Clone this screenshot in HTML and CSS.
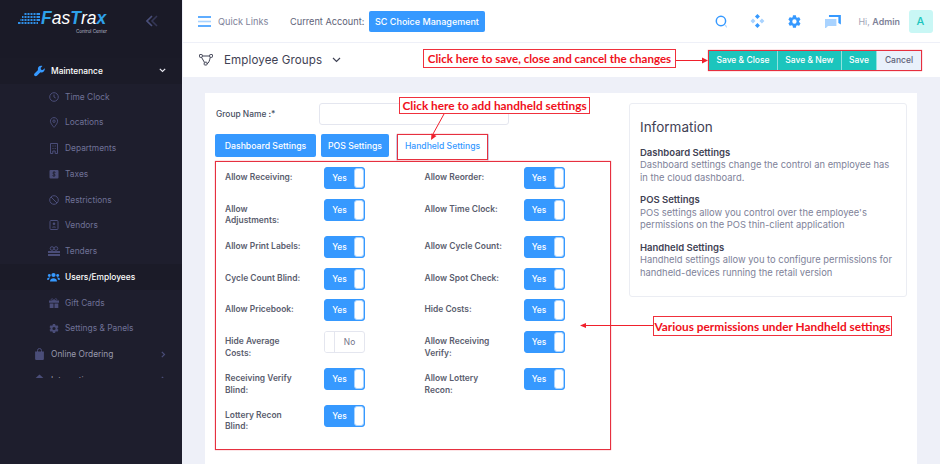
FILE: index.html
```html
<!DOCTYPE html>
<html lang="en">
<head>
<meta charset="utf-8">
<title>Employee Groups</title>
<link rel="stylesheet" href="styles.css">
</head>
<body>
<aside class="sidebar">
  <div class="brand">
    <svg class="brand-dots" width="22" height="12" viewBox="0 0 22 12"><g fill="#2f8fe8"><rect x="6" y="0" width="16" height="2"/><rect x="4" y="3" width="18" height="2"/><rect x="2" y="6" width="20" height="2"/><rect x="0" y="9" width="20" height="2"/></g><g stroke="#1a1a27" stroke-width="1"><path d="M9 0v12M12 0v12M15 0v12M18 0v12M6 0v12M3 0v12"/></g></svg>
    <div class="brand-text">
      <div class="brand-name"><span class="b">F</span>as<span class="b">T</span>ra<span class="b">x</span></div>
      <div class="brand-sub">Control Center</div>
    </div>
    <svg class="collapse" width="12" height="12" viewBox="0 0 12 12"><path d="M6 1 1 6l5 5" fill="none" stroke="#4a4f7a" stroke-width="1.6"/><path d="M11 1 6 6l5 5" fill="none" stroke="#343655" stroke-width="1.6"/></svg>
  </div>
  <div class="side-gap"></div>
  <nav class="menu">
    <div class="item top active">
      <svg class="ic" width="12" height="12" viewBox="0 0 12 12"><path d="M11.7 3 9.6 5 7.7 4.6 7.2 2.7 9.2.6C7.7-.1 6 .3 5.1 1.4 4.2 2.4 4 3.7 4.4 4.8L.6 8.6c-.7.7-.7 1.9 0 2.6.7.7 1.9.7 2.6 0L7 7.4c1.2.4 2.6.2 3.6-.8 1-1 1.4-2.3 1.1-3.6z" fill="#3699ff"/></svg>
      <span>Maintenance</span>
      <svg class="arr" width="7" height="5" viewBox="0 0 7 5"><path d="M.8.8 3.5 3.5 6.2.8" fill="none" stroke="#e8e8f0" stroke-width="1.2"/></svg>
    </div>
    <div class="item sub">
      <svg class="ic" width="10" height="10" viewBox="0 0 10 10"><circle cx="5" cy="5" r="4.3" fill="none" stroke="#4a4d78" stroke-width="1"/><path d="M5 2.5V5l1.7 1" fill="none" stroke="#4a4d78"/></svg><span>Time Clock</span>
    </div>
    <div class="item sub">
      <svg class="ic" width="10" height="11" viewBox="0 0 10 11"><path d="M5 .6C2.9.6 1.4 2.2 1.4 4.2 1.4 6.5 5 10.4 5 10.4S8.6 6.5 8.6 4.2C8.6 2.2 7.1.6 5 .6z" fill="none" stroke="#4a4d78"/><circle cx="5" cy="4.2" r="1.2" fill="none" stroke="#4a4d78"/></svg><span>Locations</span>
    </div>
    <div class="item sub">
      <svg class="ic" width="10" height="11" viewBox="0 0 10 11"><path d="M1.5.5h7v10H6.2V8H3.8v2.5H1.5z" fill="none" stroke="#4a4d78"/><path d="M3.5 2.5h1v1h-1zM5.7 2.5h1v1h-1zM3.5 5h1v1h-1zM5.7 5h1v1h-1z" fill="#4a4d78"/></svg><span>Departments</span>
    </div>
    <div class="item sub">
      <svg class="ic" width="10" height="10" viewBox="0 0 10 10"><rect x=".5" y="1" width="9" height="8.5" rx="1" fill="#4a4d78"/><path d="M6.5 3.5C6 3 4 2.8 3.8 4c-.2 1.3 2.6.9 2.4 2.2C6 7.3 4 7.1 3.4 6.5M5 2.3v5.500" fill="none" stroke="#1e1e2d" stroke-width=".8"/></svg><span>Taxes</span>
    </div>
    <div class="item sub">
      <svg class="ic" width="10" height="10" viewBox="0 0 10 10"><circle cx="5" cy="5" r="4.3" fill="none" stroke="#4a4d78"/><path d="M2 2l6 6" stroke="#4a4d78"/></svg><span>Restrictions</span>
    </div>
    <div class="item sub">
      <svg class="ic" width="10" height="10" viewBox="0 0 10 10"><rect x="1" y=".5" width="8" height="9" rx="1" fill="none" stroke="#4a4d78"/><circle cx="5" cy="3.8" r="1.3" fill="#4a4d78"/><path d="M2.8 7.5c.3-1.5 4.1-1.5 4.4 0z" fill="#4a4d78"/></svg><span>Vendors</span>
    </div>
    <div class="item sub">
      <svg class="ic" width="12" height="10" viewBox="0 0 12 10"><rect x="0" y="5" width="12" height="2" fill="#4a4d78"/><rect x="0" y="8" width="12" height="2" fill="#4a4d78"/><circle cx="4" cy="2.5" r="1.8" fill="none" stroke="#4a4d78"/><circle cx="8" cy="2.5" r="1.8" fill="none" stroke="#4a4d78"/></svg><span>Tenders</span>
    </div>
    <div class="item sub active">
      <svg class="ic" width="13" height="10" viewBox="0 0 13 10"><circle cx="6.5" cy="3" r="2.1" fill="#3699ff"/><path d="M3 9.5c0-4.4 7-4.4 7 0z" fill="#3699ff"/><circle cx="2.3" cy="3.5" r="1.4" fill="#3699ff"/><circle cx="10.7" cy="3.5" r="1.4" fill="#3699ff"/><path d="M0 7.8c0-2 1.5-2.7 3.1-2.3C2.4 6.2 2 7 2 7.8zM13 7.8c0-2-1.5-2.7-3.1-2.3.7.7 1.1 1.5 1.1 2.3z" fill="#3699ff"/></svg><span>Users/Employees</span>
    </div>
    <div class="item sub">
      <svg class="ic" width="10" height="10" viewBox="0 0 10 10"><path d="M0 2.5h10v2.3H0zM.7 5.500h3.8V10H.7zM5.500 5.500h3.8V10H5.500z" fill="#4a4d78"/><path d="M5 2.5C4 .2 1.8.4 2.3 1.8c.3.7 1.5.7 2.7.7zM5 2.5C6-.2 8.2.4 7.7 1.8 7.4 2.5 6.2 2.5 5 2.5z" fill="none" stroke="#4a4d78" stroke-width=".8"/></svg><span>Gift Cards</span>
    </div>
    <div class="item sub">
      <svg class="ic" width="11" height="11" viewBox="0 0 24 24"><path fill="#4a4d78" d="M12 15.5A3.5 3.5 0 0 1 8.5 12 3.5 3.5 0 0 1 12 8.5a3.5 3.5 0 0 1 3.5 3.5 3.5 3.5 0 0 1-3.5 3.5m7.43-2.53c.04-.32.07-.64.07-.97 0-.33-.03-.66-.07-1l2.11-1.63c.19-.15.24-.42.12-.64l-2-3.46c-.12-.22-.39-.31-.61-.22l-2.49 1c-.52-.39-1.06-.73-1.69-.98l-.37-2.65A.506.506 0 0 0 14 2h-4c-.25 0-.46.18-.5.42l-.37 2.65c-.63.25-1.17.59-1.69.98l-2.49-1c-.22-.09-.49 0-.61.22l-2 3.46c-.13.22-.07.49.12.64L4.57 11c-.04.34-.07.67-.07 1 0 .33.03.65.07.97l-2.11 1.66c-.19.15-.25.42-.12.64l2 3.46c.12.22.39.3.61.22l2.49-1.01c.52.4 1.06.74 1.69.99l.37 2.65c.04.24.25.42.5.42h4c.25 0 .46-.18.5-.42l.37-2.65c.63-.26 1.17-.59 1.69-.99l2.49 1.01c.22.08.49 0 .61-.22l2-3.46c.12-.22.07-.49-.12-.64l-2.11-1.66z"/></svg><span>Settings &amp; Panels</span>
    </div>
    <div class="item top">
      <svg class="ic" width="10" height="12" viewBox="0 0 10 12"><path d="M.6 3.5h8.8V11a1 1 0 0 1-1 1H1.6a1 1 0 0 1-1-1z" fill="#4a4d78"/><path d="M3 5V2.500a2 2 0 0 1 4 0V5" fill="none" stroke="#4a4d78"/></svg><span>Online Ordering</span>
      <svg class="arr" width="5" height="7" viewBox="0 0 5 7"><path d="M.8.8 3.5 3.5.8 6.2" fill="none" stroke="#4a4d78" stroke-width="1.2"/></svg>
    </div>
    <div class="item top">
      <svg class="ic" width="11" height="12" viewBox="0 0 11 12"><path d="M5.5.5 10.5 5v7H.5V5z" fill="#4a4d78"/></svg><span>Integrations</span>
      <svg class="arr" width="5" height="7" viewBox="0 0 5 7"><path d="M.8.8 3.5 3.5.8 6.2" fill="none" stroke="#4a4d78" stroke-width="1.2"/></svg>
    </div>
  </nav>
</aside>

<div class="main">
  <header class="topbar">
    <svg class="burger" width="13" height="11" viewBox="0 0 13 11"><path d="M0 1h13" stroke="#3699ff" stroke-width="1.6"/><path d="M0 5.5h13" stroke="#a9d3ff" stroke-width="1.6"/><path d="M0 10h13" stroke="#3699ff" stroke-width="1.6"/></svg>
    <span class="quick">Quick Links</span>
    <span class="account-label">Current Account:</span>
    <button class="account-btn">SC Choice Management</button>
    <div class="top-icons">
      <svg width="13" height="13" viewBox="0 0 13 13"><circle cx="6" cy="6" r="4.7" fill="none" stroke="#3699ff" stroke-width="1.5"/><path d="M10 10l2.5 2.5" stroke="#bcdcfd" stroke-width="1.3"/></svg>
      <svg width="15" height="14" viewBox="0 0 15 14"><path d="M7.5 0 10 2.5 7.5 5 5 2.5zM7.5 9 10 11.5 7.5 14 5 11.5z" fill="#3699ff"/><path d="M3 4.5 5.5 7 3 9.5.5 7zM12 4.5 14.5 7 12 9.5 9.5 7z" fill="#a9d3ff"/></svg>
      <svg width="15" height="15" viewBox="0 0 24 24"><path fill="#3699ff" d="M12 15.5A3.5 3.5 0 0 1 8.5 12 3.5 3.5 0 0 1 12 8.5a3.5 3.5 0 0 1 3.5 3.5 3.5 3.5 0 0 1-3.5 3.5m7.43-2.53c.04-.32.07-.64.07-.97 0-.33-.03-.66-.07-1l2.11-1.63c.19-.15.24-.42.12-.64l-2-3.46c-.12-.22-.39-.31-.61-.22l-2.49 1c-.52-.39-1.06-.73-1.69-.98l-.37-2.65A.506.506 0 0 0 14 2h-4c-.25 0-.46.18-.5.42l-.37 2.65c-.63.25-1.17.59-1.69.98l-2.49-1c-.22-.09-.49 0-.61.22l-2 3.46c-.13.22-.07.49.12.64L4.57 11c-.04.34-.07.67-.07 1 0 .33.03.65.07.97l-2.11 1.66c-.19.15-.25.42-.12.64l2 3.46c.12.22.39.3.61.22l2.49-1.01c.52.4 1.06.74 1.69.99l.37 2.65c.04.24.25.42.5.42h4c.25 0 .46-.18.5-.42l.37-2.65c.63-.26 1.17-.59 1.69-.99l2.49 1.01c.22.08.49 0 .61-.22l2-3.46c.12-.22.07-.49-.12-.64l-2.11-1.66z"/></svg>
      <svg width="16" height="13" viewBox="0 0 16 13"><path d="M4 0h12v9.5L13.5 8V2H4z" fill="#3699ff"/><path d="M0 4h11.5v7H3l-2 2H0z" fill="#a9d3ff"/></svg>
    </div>
    <span class="hi">Hi, <b>Admin</b></span>
    <div class="avatar">A</div>
  </header>

  <div class="subheader">
    <svg class="flow-ic" width="14" height="12" viewBox="0 0 14 12"><g fill="none" stroke="#3f4254" stroke-width="1"><rect x=".5" y=".5" width="2.8" height="2.8" rx=".6"/><rect x="10.7" y=".5" width="2.8" height="2.8" rx=".6"/><rect x="5.2" y="8.2" width="2.8" height="2.8" rx=".6"/><path d="M3.3 2h7.4M2.5 3.300 5.400 8.300M11.3 3.200C10.500 7 9.500 9.500 8 9.700"/></g></svg>
    <span class="page-title">Employee Groups</span>
    <svg class="title-arr" width="9" height="6" viewBox="0 0 9 6"><path d="M1 1l3.5 3.5L8 1" fill="none" stroke="#3f4254" stroke-width="1.2"/></svg>
    <div class="actions">
      <button class="act">Save &amp; Close</button>
      <button class="act">Save &amp; New</button>
      <button class="act">Save</button>
      <button class="act cancel">Cancel</button>
    </div>
  </div>

  <div class="content">
    <section class="card">
      <div class="form">
        <div class="group-row">
          <label class="group-label">Group Name :*</label>
          <div class="group-input"></div>
        </div>
        <div class="tabs">
          <button class="tab tab-d">Dashboard Settings</button>
          <button class="tab tab-p">POS Settings</button>
          <button class="tab tab-h">Handheld Settings</button>
        </div>
        <div class="perms">
          <div class="perm"><span class="perm-l">Allow Receiving:</span><div class="tog"><span class="tog-y">Yes</span><span class="tog-k"></span></div></div>
          <div class="perm"><span class="perm-l">Allow Reorder:</span><div class="tog"><span class="tog-y">Yes</span><span class="tog-k"></span></div></div>
          <div class="perm"><span class="perm-l">Allow<br>Adjustments:</span><div class="tog"><span class="tog-y">Yes</span><span class="tog-k"></span></div></div>
          <div class="perm"><span class="perm-l">Allow Time Clock:</span><div class="tog"><span class="tog-y">Yes</span><span class="tog-k"></span></div></div>
          <div class="perm"><span class="perm-l">Allow Print Labels:</span><div class="tog"><span class="tog-y">Yes</span><span class="tog-k"></span></div></div>
          <div class="perm"><span class="perm-l">Allow Cycle Count:</span><div class="tog"><span class="tog-y">Yes</span><span class="tog-k"></span></div></div>
          <div class="perm"><span class="perm-l">Cycle Count Blind:</span><div class="tog"><span class="tog-y">Yes</span><span class="tog-k"></span></div></div>
          <div class="perm"><span class="perm-l">Allow Spot Check:</span><div class="tog"><span class="tog-y">Yes</span><span class="tog-k"></span></div></div>
          <div class="perm"><span class="perm-l">Allow Pricebook:</span><div class="tog"><span class="tog-y">Yes</span><span class="tog-k"></span></div></div>
          <div class="perm"><span class="perm-l">Hide Costs:</span><div class="tog"><span class="tog-y">Yes</span><span class="tog-k"></span></div></div>
          <div class="perm"><span class="perm-l">Hide Average<br>Costs:</span><div class="tog off"><span class="tog-k"></span><span class="tog-n">No</span></div></div>
          <div class="perm"><span class="perm-l">Allow Receiving<br>Verify:</span><div class="tog"><span class="tog-y">Yes</span><span class="tog-k"></span></div></div>
          <div class="perm"><span class="perm-l">Receiving Verify<br>Blind:</span><div class="tog"><span class="tog-y">Yes</span><span class="tog-k"></span></div></div>
          <div class="perm"><span class="perm-l">Allow Lottery<br>Recon:</span><div class="tog"><span class="tog-y">Yes</span><span class="tog-k"></span></div></div>
          <div class="perm"><span class="perm-l">Lottery Recon<br>Blind:</span><div class="tog"><span class="tog-y">Yes</span><span class="tog-k"></span></div></div>
        </div>
      </div>
      <aside class="info">
        <h2 class="info-title">Information</h2>
        <h3 class="info-h">Dashboard Settings</h3>
        <p class="info-p">Dashboard settings change the control an employee has in the cloud dashboard.</p>
        <h3 class="info-h">POS Settings</h3>
        <p class="info-p">POS settings allow you control over the employee's permissions on the POS thin-client application</p>
        <h3 class="info-h">Handheld Settings</h3>
        <p class="info-p">Handheld settings allow you to configure permissions for handheld-devices running the retail version</p>
      </aside>
    </section>
  </div>
</div>

<div class="note note-save">Click here to save, close and cancel the changes</div>
<div class="note note-add">Click here to add handheld settings</div>
<div class="note note-perm">Various permissions under Handheld settings</div>
<div class="frame frame-actions"></div>
<div class="frame frame-tab"></div>
<div class="frame frame-perms"></div>
<svg class="arrows" width="940" height="464" viewBox="0 0 940 464">
  <g stroke="#f0202c" stroke-width="1" fill="#f0202c">
    <path d="M676 60.5H702" fill="none"/><path d="M708 60.5l-6-3v6z" stroke="none"/>
    <path d="M444 114 433 134" fill="none"/><path d="M431 140l.5-6.5 5 2.5z" stroke="none"/>
    <path d="M653 325.5H585" fill="none"/><path d="M580 325.5l6-2.5v5z" stroke="none"/>
  </g>
</svg>
</body>
</html>
```

FILE: styles.css
```css
* { box-sizing: border-box; }
html, body { margin: 0; padding: 0; }
body {
  position: relative;
  width: 940px;
  height: 464px;
  overflow: hidden;
  display: flex;
  font-family: Inter, "Noto Sans", sans-serif;
  background: #eef0f8;
  color: #3f4254;
}
button { font: inherit; border: 0; padding: 0; cursor: pointer; white-space: nowrap; }

/* sidebar */
.sidebar {
  width: 182px;
  flex: none;
  height: 464px;
  background: #1e1e2d;
  display: flex;
  flex-direction: column;
}
.brand {
  height: 42px;
  background: #1a1a27;
  display: flex;
  align-items: center;
  padding: 0 24px 0 18px;
}
.brand-dots { margin-top: -5px; margin-right: 1px; }
.brand-text { width: 66px; }
.brand-name {
  font-family: "Liberation Sans", sans-serif;
  font-style: italic;
  font-size: 17.500px;
  line-height: 21px;
  color: #fff;
  white-space: nowrap;
}
.brand-name .b { color: #2ea1ea; font-weight: 700; }
.brand-sub {
  font-size: 4.500px;
  line-height: 5px;
  text-align: right;
  color: #b9bccb;
  white-space: nowrap;
}
.collapse { margin-left: auto; }
.side-gap { height: 16px; background: #1a1a27; }
.menu { height: 320px; overflow: hidden; }
.item {
  height: 25.750px;
  display: flex;
  align-items: center;
  font-size: 8.400px;
  color: #8a8dab;
}
.item.top { padding-left: 34px; color: #9899ac; }
.item.sub { padding-left: 48px; color: #6f7196; }
.item.active { background: #1b1b28; color: #fff; font-weight: 500; }
.item.top .ic { width: 11px; margin-right: 6px; }
.item.sub .ic { width: 12px; margin-right: 5px; flex: none; }
.item.sub.active { padding-left: 47px; }
.item.sub.active .ic { width: 13px; margin-right: 5px; }
.arr { margin-left: auto; margin-right: 16px; }

/* top bar */
.main { flex: 1; min-width: 0; display: flex; flex-direction: column; margin-left: 1px; }
.topbar {
  height: 42px;
  background: #fff;
  display: flex;
  align-items: center;
  padding-left: 15px;
  flex: none;
  font-size: 9.200px;
  margin-bottom: 1px;
}
.burger { margin-right: 7px; }
.quick { color: #7e8299; width: 72px; }
.account-label { color: #5e6278; width: 79px; white-space: nowrap; }
.account-btn {
  width: 116px;
  height: 21px;
  background: #3699ff;
  color: #fff;
  border-radius: 2px;
  font-size: 9px;
  font-weight: 500;
}
.top-icons {
  display: flex;
  align-items: center;
  gap: 22.500px;
  width: 126px;
  margin-left: 229.500px;
}
.hi { font-size: 8.900px; color: #a1a5b7; margin-left: 18px; width: 50px; white-space: nowrap; }
.hi b { color: #7e8299; font-weight: 600; }
.avatar {
  width: 24px;
  height: 23px;
  background: #c9f7f5;
  color: #1bc5bd;
  border-radius: 3px;
  display: flex;
  align-items: center;
  justify-content: center;
  font-size: 11px;
  font-weight: 500;
}

/* sub header */
.subheader {
  height: 34px;
  flex: none;
  background: #fff;
  display: flex;
  align-items: center;
  padding-left: 16px;
}
.flow-ic { margin-right: 11px; }
.page-title { font-size: 11.600px; width: 108px; color: #3f4254; white-space: nowrap; letter-spacing: .1px; }
.actions { margin-left: auto; margin-right: 19px; display: flex; height: 19px; }
.act {
  background: #1bc5bd;
  color: #fff;
  font-size: 8.500px;
  font-weight: 500;
  width: 69px;
  border-right: 1px solid #8fe2de;
}
.act:nth-child(2) { width: 64px; }
.act:nth-child(3) { width: 35px; }
.act.cancel { width: 44px; background: #e9f1fb; color: #5e6278; border-right: 0; }

/* content */
.content { flex: 1; padding: 16px 23px 0 22px; min-height: 0; }
.card {
  background: #fff;
  height: 100%;
  display: flex;
  padding: 10px 10px 0 10px;
}
.form { width: 414px; flex: none; }
.group-row { display: flex; align-items: center; height: 22px; padding-left: 1px; }
.group-label { width: 103px; font-size: 8.400px; font-weight: 500; color: #464e5f; }
.group-input { width: 190px; height: 22px; border: 1px solid #e4e6ef; border-radius: 3px; background: #fff; }
.tabs { display: flex; margin-top: 9px; height: 27px; align-items: flex-start; }
.tab {
  height: 23px;
  background: #3699ff;
  color: #fff;
  font-size: 8.700px;
  font-weight: 500;
  border-radius: 2px;
}
.tab-d { width: 101px; }
.tab-p { width: 68px; margin-left: 5px; }
.tab-h {
  width: 93px;
  height: 27px;
  margin-left: 7px;
  padding-bottom: 4px;
  background: #fff;
  color: #3699ff;
  border: 1px solid #c6e1fd;
  border-bottom: 0;
  font-size: 8.600px;
}
.perms {
  display: grid;
  grid-template-columns: 199.500px 199.500px;
  row-gap: 9.850px;
  align-items: start;
  padding: 6px 0 0 10px;
}
.perm { display: flex; align-items: flex-start; }
.perm-l {
  width: 99px;
  flex: none;
  padding: 5px 0 0;
  margin-bottom: -1px;
  font-size: 8.450px;
  line-height: 11.500px;
  font-weight: 600;
  color: #5a5d6e;
  white-space: nowrap;
}
.tog {
  width: 41px;
  height: 22px;
  display: flex;
  border: 1px solid #3699ff;
  background: #3699ff;
  border-radius: 3px;
  font-size: 8.400px;
  overflow: hidden;
}
.tog-y {
  width: 30px;
  color: #fff;
  font-weight: 500;
  display: flex;
  align-items: center;
  justify-content: center;
}
.tog-k { width: 10px; background: #fff; border-radius: 3px; flex: none; margin-left: auto; border: 1px solid #a9d3ff; }
.tog.off { background: #fff; border-color: #e4e6ef; }
.tog.off .tog-k { margin-left: 0; border: 0; border-right: 1px solid #e4e6ef; border-radius: 0; }
.tog-n { flex: 1; color: #6f7288; display: flex; align-items: center; justify-content: center; }

/* info */
.info {
  width: 278px;
  height: 194px;
  flex: none;
  border: 1px solid #ebedf3;
  border-radius: 3px;
  padding: 15px 10px 0 10px;
}
.info-title { margin: 0 0 10.500px; font-size: 13.500px; line-height: 17px; font-weight: 400; color: #3f4254; }
.info-h { margin: 0; font-size: 9.500px; line-height: 12.500px; font-weight: 600; color: #3f4254; }
.info-p { margin: 0 0 10px; font-size: 9.400px; line-height: 12.500px; color: #7e8299; }

/* annotations over the page */
.note {
  position: absolute;
  display: flex;
  align-items: center;
  justify-content: center;
  font-family: Lato, sans-serif;
  font-weight: 700;
  font-size: 11.850px;
  color: #f01020;
  background: #fff;
  border: 1px solid #f0303c;
  white-space: nowrap;
}
.note-save { left: 423px; top: 49px; width: 253px; height: 19px; font-size: 11.550px; }
.note-add { left: 399px; top: 97px; width: 191px; height: 17px; }
.note-perm { left: 653px; top: 316px; width: 239px; height: 20px; }
.frame { position: absolute; border: 1px solid #e6303f; box-shadow: 0 0 1px rgba(240, 40, 50, .7); }
.frame-actions { left: 708px; top: 50px; width: 214px; height: 21px; }
.frame-tab { left: 397px; top: 134px; width: 91px; height: 26px; }
.frame-perms { left: 215px; top: 161px; width: 396px; height: 289px; }
.arrows { position: absolute; left: 0; top: 0; pointer-events: none; }
```
